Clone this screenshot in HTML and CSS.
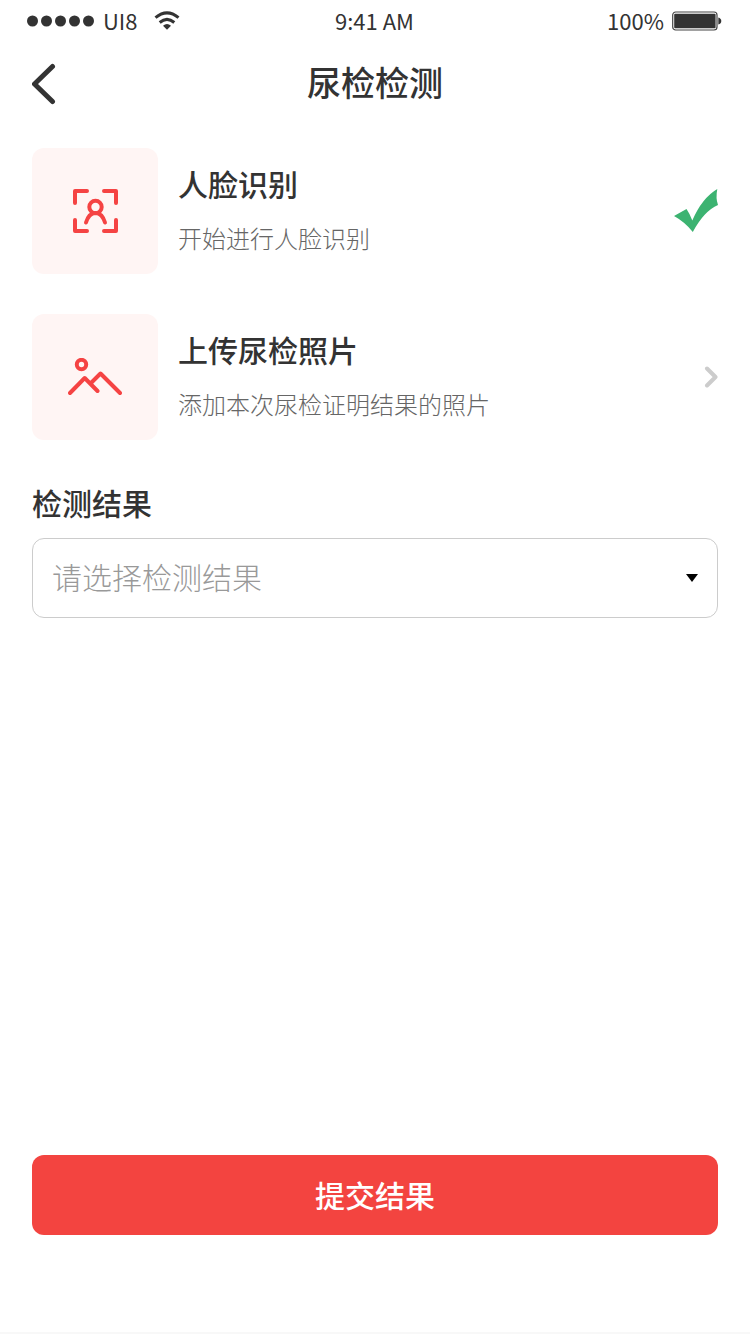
FILE: index.html
```html
<!DOCTYPE html>
<html lang="zh-CN">
<head>
<meta charset="utf-8">
<meta name="viewport" content="width=device-width, initial-scale=1">
<title>尿检检测</title>
<link rel="stylesheet" href="styles.css">
</head>
<body>
<div class="screen">
  <div class="status">
    <div class="status-left">
      <svg width="68" height="12" viewBox="0 0 68 12" fill="#333" aria-hidden="true"><circle cx="5.5" cy="6" r="5.5"/><circle cx="19.5" cy="6" r="5.5"/><circle cx="33.5" cy="6" r="5.5"/><circle cx="47.5" cy="6" r="5.5"/><circle cx="61.5" cy="6" r="5.5"/></svg>
      <span class="status-text">UI8</span>
      <svg class="wifi" width="26" height="20" viewBox="0 0 26 20" aria-hidden="true"><g fill="none" stroke="#333"><path d="M1.500 6.700Q13-2.900 24.500 6.700" stroke-width="3"/><path d="M5.700 11.500Q13 5.300 20.300 11.500" stroke-width="3"/></g><path d="M9 14.800Q13 11.400 17 14.800L13 18.800Z" fill="#333"/></svg>
    </div>
    <span class="status-text">9:41 AM</span>
    <div class="status-right">
      <span class="status-text">100%</span>
      <svg width="50" height="20" viewBox="0 0 50 20" aria-hidden="true"><rect x="0.700" y="1" width="44.300" height="18" rx="3" fill="none" stroke="#444" stroke-width="1.200"/><rect x="2.200" y="2.700" width="41.400" height="14.600" rx="1" fill="#333"/><path d="M46.300 6.500Q49.300 7.500 49.300 10T46.300 13.500Z" fill="#333"/></svg>
    </div>
  </div>
  <header class="header">
    <button class="back" type="button" aria-label="返回"><svg width="26" height="42" viewBox="0 0 26 42" fill="none" stroke="#333" stroke-width="5" stroke-linecap="round" stroke-linejoin="round" aria-hidden="true"><path d="M20.500 3.500L2.500 21L20.500 38.500"/></svg></button>
    <h1 class="title">尿检检测</h1>
  </header>
  <main class="main">
    <div class="steps">
      <button class="step" type="button">
        <span class="tile"><svg width="46" height="46" viewBox="0 0 46 46" fill="none" stroke="#f54343" stroke-width="4" stroke-linecap="round" aria-hidden="true"><path d="M15 3H3V15M32 3H44V15M15 43H3V32M32 43H44V32" stroke-linejoin="round"/><circle cx="23.500" cy="19" r="6.200"/><path d="M14 34.500Q17 25 23.500 25T33 34.500"/></svg></span>
        <span class="step-text"><span class="step-name">人脸识别</span><span class="step-note">开始进行人脸识别</span></span>
        <svg width="44" height="44" viewBox="0 0 44 44" fill="#3cb371" role="img" aria-label="已完成"><path d="M0 27L12.500 20Q16 25 18.300 31.500Q28 9 43.300 0Q41.500 9 44 16Q30 22 18.800 43Q11 33 0 27Z"/></svg>
      </button>
      <button class="step" type="button">
        <span class="tile"><svg width="54" height="38" viewBox="0 0 54 38" fill="none" stroke="#f54343" stroke-width="4" stroke-linecap="round" stroke-linejoin="round" aria-hidden="true"><circle cx="13.500" cy="6.500" r="4.700"/><path d="M2 35L16.700 20L29.500 33M22.500 25.500L32.500 15.500L52 35"/></svg></span>
        <span class="step-text"><span class="step-name">上传尿检照片</span><span class="step-note">添加本次尿检证明结果的照片</span></span>
        <svg width="14" height="22" viewBox="0 0 14 22" fill="none" stroke="#ccc" stroke-width="4" stroke-linecap="round" stroke-linejoin="round" aria-hidden="true"><path d="M3 2.500L11.500 11L3 19.500"/></svg>
      </button>
    </div>
    <label class="label" for="result">检测结果</label>
    <div class="field">
      <select id="result" class="select"><option>请选择检测结果</option><option>阴性</option><option>阳性</option></select>
      <svg class="caret" width="12" height="8" viewBox="0 0 12 8" aria-hidden="true"><path d="M0 0H12L6 8Z"/></svg>
    </div>
    <button class="submit" type="button">提交结果</button>
  </main>
</div>
</body>
</html>
```
FILE: styles.css
```css
* { box-sizing: border-box; }
body {
  margin: 0;
  background: #fff;
  color: #333;
  font-family: "Noto Sans CJK SC", sans-serif;
}
button, select { font: inherit; color: inherit; border: 0; background: none; padding: 0; }
svg { display: block; flex: none; }
.screen {
  min-height: 100vh;
  display: flex;
  flex-direction: column;
  border-bottom: 2px solid #f8f8f8;
}
.status {
  display: grid;
  grid-template-columns: 1fr auto 1fr;
  align-items: center;
  height: 42px;
  padding: 0 28px 0 27px;
  font-size: 22px;
  line-height: 40px;
}
.status-text { padding-bottom: 2px; }
.status-left, .status-right { display: flex; align-items: center; gap: 8px; }
.status-right { justify-content: flex-end; }
.wifi { margin-left: 8px; }
.header {
  display: grid;
  grid-template-columns: 44px 1fr 44px;
  align-items: center;
  height: 84px;
  padding: 0 32px;
}
.back { justify-self: start; cursor: pointer; }
.title { margin: 0; padding-bottom: 4px; text-align: center; font-size: 34px; line-height: 48px; font-weight: 500; }
.main {
  flex: 1;
  display: flex;
  flex-direction: column;
  padding: 22px 32px 97px;
}
.steps { display: flex; flex-direction: column; gap: 40px; }
.step { display: flex; align-items: center; gap: 20px; text-align: left; cursor: pointer; }
.tile {
  flex: none;
  display: grid;
  place-items: center;
  width: 126px;
  height: 126px;
  border-radius: 12px;
  background: #fff5f4;
}
.step-text { flex: 1; display: flex; flex-direction: column; gap: 16px; padding-bottom: 4px; }
.step-name { font-size: 30px; line-height: 42px; font-weight: 500; }
.step-note { font-size: 24px; line-height: 36px; font-weight: 300; color: #666; }
.label { margin-top: 40px; font-size: 30px; line-height: 44px; font-weight: 500; }
.field { display: grid; align-items: center; margin-top: 14px; }
.select, .caret { grid-area: 1 / 1; }
.select {
  appearance: none;
  width: 100%;
  height: 80px;
  padding: 0 52px 4px 19px;
  border: 1px solid #ccc;
  border-radius: 12px;
  font-size: 30px;
  font-weight: 300;
  color: #999;
}
.caret { justify-self: end; margin-right: 20px; pointer-events: none; }
.submit {
  margin-top: auto;
  height: 80px;
  padding-bottom: 2px;
  border-radius: 12px;
  background: #f34440;
  color: #fff;
  font-size: 30px;
  font-weight: 500;
  cursor: pointer;
}
```
